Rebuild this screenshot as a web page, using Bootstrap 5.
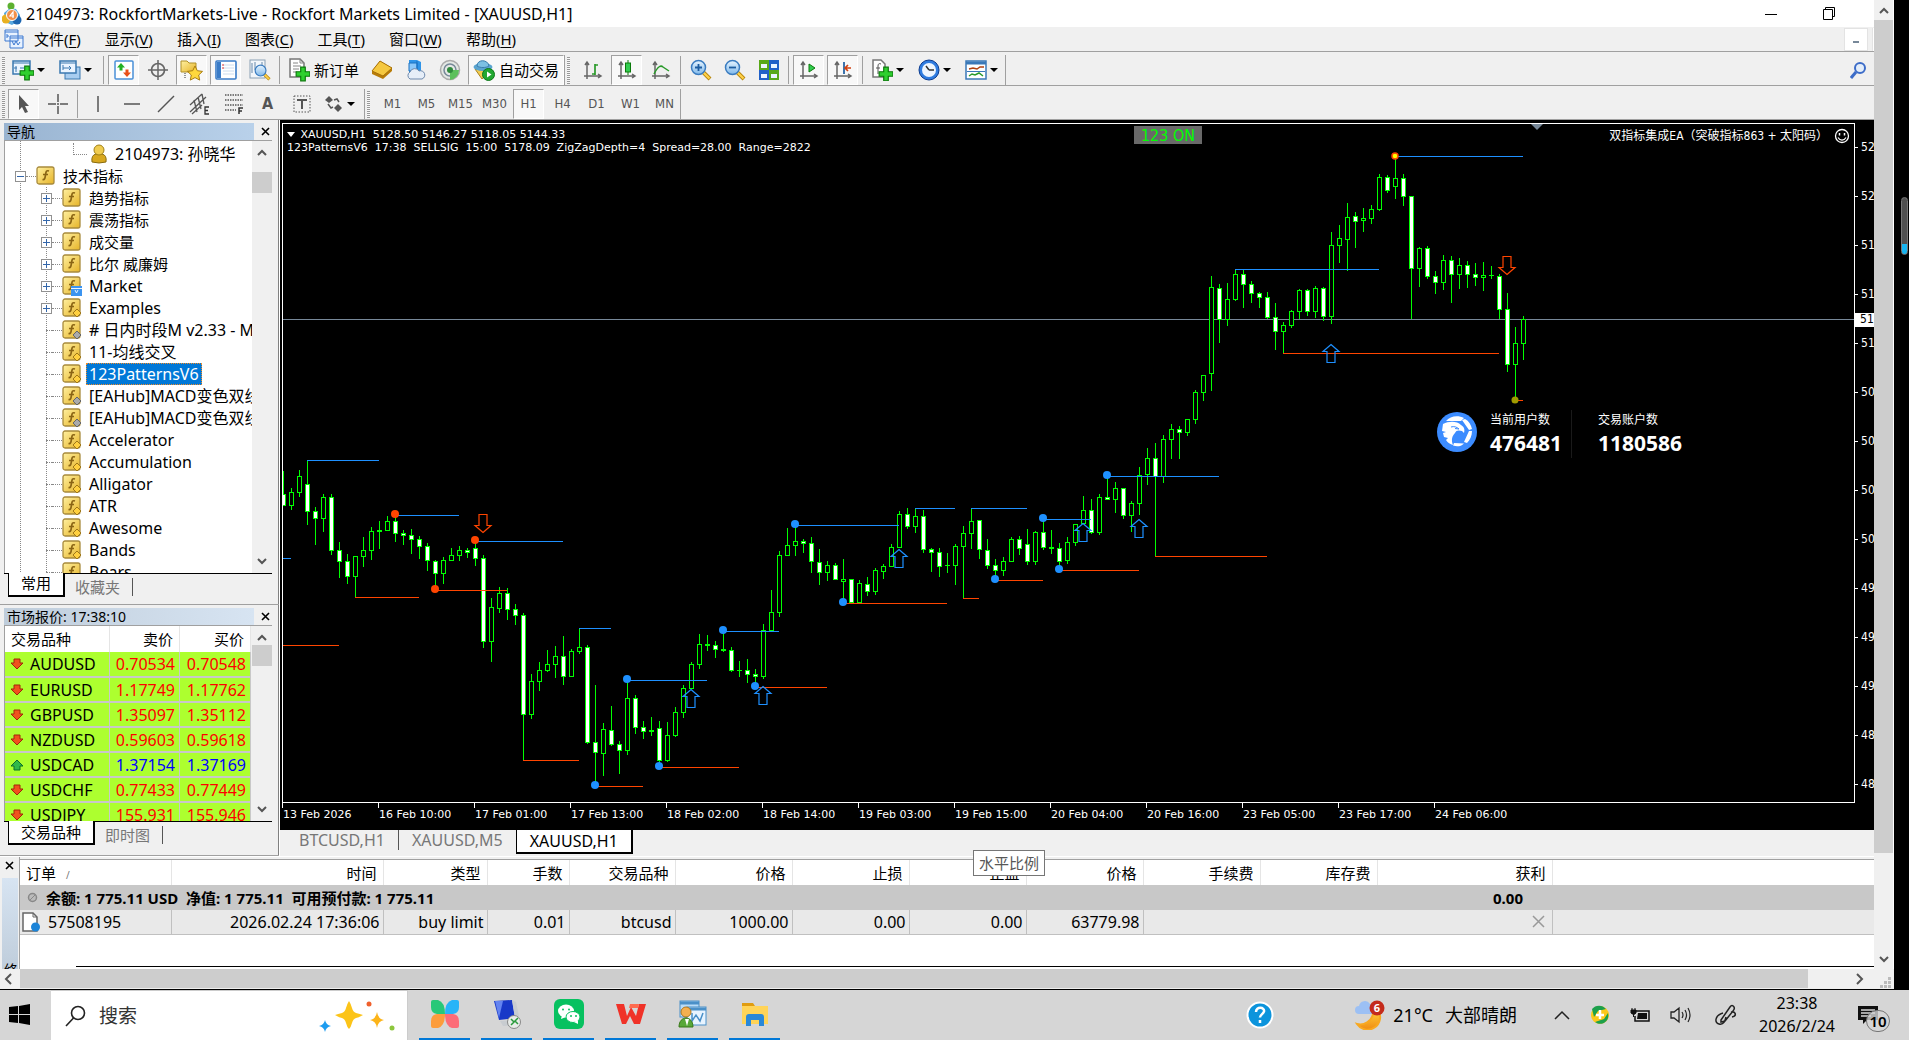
<!DOCTYPE html>
<html lang="zh-CN">
<head>
  <meta charset="UTF-8">
  <meta name="viewport" content="width=device-width, initial-scale=1">
  <title>2104973: RockfortMarkets-Live - Rockfort Markets Limited - [XAUUSD,H1]</title>
  <link rel="stylesheet" href="https://cdn.jsdelivr.net/npm/bootstrap@5.3.0/dist/css/bootstrap.min.css">
  <style>
    :root {
      --ui: "Noto Sans", "Noto Sans CJK SC", sans-serif;
      --tahoma: "DejaVu Sans Condensed", "Noto Sans", "Noto Sans CJK SC", sans-serif;
      --face: #f0f0f0;
      --edge: #a0a0a0;
    }
    body { font-family: var(--ui); font-size: 15px; line-height: 20px; color: #000; background: #000; }
    button { border: 0; background: none; padding: 0; color: inherit; }
    svg { display: block; flex: none; }
    .min-0 { min-width: 0; min-height: 0; }
    .face { background: var(--face); }

    /* 标题栏和菜单 */
    .title-bar { height: 28px; padding-left: 2px; font-size: 16px; }
    .title-bar .win-btn { width: 58px; height: 26px; }
    .title-bar .win-btns { padding-right: 16px; }
    .menu-bar { height: 26px; border-bottom: 1px solid var(--edge); }
    .menu-bar a { color: #000; text-decoration: none; margin-left: 24px; font-size: 15px; }
    .menu-bar a:first-of-type { margin-left: 10px; }
    .menu-bar a u { text-underline-offset: 2px; }
    .mdi-btn { width: 24px; height: 23px; background: #fff; border: 1px solid #e3e3e3; }
    .mdi-cut { width: 2px; height: 23px; background: #fff; border-left: 1px solid #e3e3e3; }

    /* 工具栏 */
    .tool-row { height: 34px; padding-top: 3px; border-bottom: 1px solid var(--edge); }
    .tool-group { gap: 3px; height: 30px; padding-left: 2px; border-right: 1px solid var(--edge); }
    .grip { width: 3px; height: 27px; background: repeating-linear-gradient(#999 0 1px, #f8f8f8 1px 2px); }
    .tb-btn { width: 31px; height: 30px; display: flex; align-items: center; justify-content: center; font-family: var(--tahoma); font-size: 13px; color: #555; }
    .tb-btn.pressed { background: #f8f8f8; border: 1px solid #fff; border-top-color: var(--edge); border-left-color: var(--edge); }
    .tb-btn.drop { width: 44px; justify-content: flex-start; gap: 3px; padding: 0 4px; }
    .tb-btn.drop::after { content: ""; border: 4px solid transparent; border-top-color: #000; border-bottom: 0; }
    .tb-btn.wide { width: auto; font-family: var(--ui); font-size: 15px; color: #000; padding: 0 4px; gap: 4px; }
    .sep { width: 3px; height: 28px; border-left: 1px solid var(--edge); margin-left: 1px; margin-right: -1px; }

    /* 左侧面板 */
    .side { width: 280px; border-right: 1px solid #fff; box-shadow: inset -1px 0 #808080; }
    .side-panel { padding: 3px 7px 5px 4px; border-bottom: 1px solid var(--edge); }
    .side-panel:last-child { padding-bottom: 7px; }
    .panel-title { height: 17px; line-height: 17px; font-size: 14px; }
    .panel-title span { background: linear-gradient(90deg, #99b4d1, #b9d1ea); padding-left: 3px; }
    .panel-title.idle span { background: linear-gradient(90deg, #bfcddb, #d7e4f2); }
    .panel-title button { width: 22px; height: 17px; margin-right: -4px; }
    .panel-box { border-left: 1px solid var(--edge); border-top: 1px solid var(--edge); }
    .panel-view { background: #fff; overflow: hidden; }
    .v-scroll { width: 21px; background: var(--face); }
    .v-scroll i { display: block; width: 20px; height: 21px; background: #cdcdcd; }
    .tab-strip { height: 27px; border-top: 1px solid #000; }
    .tab-strip button { height: 24px; padding: 0 12px; line-height: 20px; color: #777; }
    .tab-strip button:not(.on) { border-right: 1px solid #555; height: 18px; line-height: 14px; padding-left: 10px; }
    .tab-strip .on { background: #fff; color: #000; border: 1px solid #000; border-top: 0; border-right-width: 2px; border-bottom-width: 2px; margin-top: -1px; padding-bottom: 1px; }

    .tree, .tree ul { list-style: none; margin: 0; padding: 0; background: repeating-linear-gradient(#888 0 1px, #fff 1px 2px) 15px 0 / 1px 100% no-repeat; }
    .tree { padding-top: 2px; height: 100%; }
    .tree ul { background: repeating-linear-gradient(#888 0 1px, #fff 1px 2px) 41px 0 / 1px 100% no-repeat; }
    .tree-row { display: flex; align-items: center; height: 22px; white-space: nowrap; }
    .tree-row > * { flex-shrink: 0; }
    .tree-row .twig { width: 10px; border-top: 1px dotted #888; }
    .tree-row .box { width: 11px; height: 11px; border: 1px solid #919191; background: #fff linear-gradient(#36a, #36a) center / 7px 1px no-repeat; }
    .tree-row .box.plus { background: linear-gradient(#36a, #36a) center / 7px 1px no-repeat, linear-gradient(#36a, #36a) center / 1px 7px no-repeat, #fff; }
    .tree-row .leaf { width: 6px; margin-left: 5px; border-top: 1px dotted #888; }
    .tree-row svg { margin-right: 4px; }
    .tree-row .tx { padding: 0 2px; border: 1px solid transparent; line-height: 20px; height: 22px; }
    .tree-row .tx.latin { font-size: 16px; }
    .tree-row .tx.sel { background: #0078d7; color: #fff; border: 1px dotted #f08c28; }
    .lv-1 { padding-left: 10px; }
    .lv-2 { padding-left: 36px; }
    .account { padding-left: 68px; }
    .account .elbow { width: 14px; height: 12px; border: 1px dotted #888; border-top: 0; border-right: 0; align-self: flex-start; margin-right: 3px; }

    .quotes { height: 196px; }
    .quotes table { table-layout: fixed; width: 246px; margin: 0; }
    .quotes th { font-weight: 400; height: 26px; padding: 0 6px; border-right: 1px solid #e5e5e5; }
    .quotes td { height: 25px; padding: 0 4px 0 5px; font-size: 16px; background: #adff2f; border-right: 1px solid #c8c8c8; border-bottom: 2px solid #c8c8c8; color: #f00; }
    .quotes td .sym { gap: 6px; color: #000; }
    .quotes .up td { color: #00f; }

    /* 图表 */
    .chart { background: #000; color: #fff; font-family: "DejaVu Sans", "Noto Sans CJK SC", sans-serif; font-size: 11px; line-height: 13px; padding: 3px 0 0 1px; border-left: 1px solid #000; }
    .plot { border: 1px solid #fff; }
    .plot > svg { position: absolute; inset: 0; width: 100%; height: 100%; }
    .head-lines { position: absolute; left: 4px; top: 4px; white-space: pre; }
    .ea-name { position: absolute; right: 4px; top: 4px; gap: 6px; font-family: var(--tahoma); font-size: 12px; }
    .on-badge { position: absolute; left: 851px; top: 2px; width: 68px; height: 18px; line-height: 19px; font-family: var(--tahoma); font-size: 16px; background: #696969; color: #0f0; text-align: center; }
    .user-box { position: absolute; left: 1154px; top: 286px; font-family: var(--ui); font-size: 12px; }
    .user-box .stat { width: 81px; padding-top: 1px; line-height: 17px; }
    .user-box .stat + .stat { border-left: 1px solid #1a1a1a; width: 130px; padding-left: 26px; }
    .user-box b { display: block; font-size: 21px; line-height: 30px; font-weight: 700; }
    .price-axis { width: 19px; padding-top: 18px; font-family: var(--tahoma); font-size: 12px; }
    .price-axis div { height: 49px; padding-left: 6px; position: relative; }
    .price-axis div::before { content: ""; position: absolute; left: 0; top: 6px; width: 3px; border-top: 1px solid #fff; }
    .price-now { position: absolute; left: 0; top: 190px; width: 19px; height: 14px; padding-left: 5px; background: #fff; color: #000; }
    .time-axis { height: 25px; }
    .time-axis span { width: 96px; flex: none; border-left: 1px solid #fff; height: 4px; padding-top: 5px; line-height: 13px; white-space: nowrap; }
    .chart-tabs { height: 28px; border-top: 2px solid #000; padding-left: 1px; font-size: 16px; }
    .chart-tabs button { height: 20px; padding: 0 13px; color: #777; border-right: 1px solid #555; }
    .chart-tabs button:first-child { padding-left: 18px; }
    .chart-tabs button:nth-child(2) { border-right: 0; }
    .chart-tabs .on { height: 24px; background: #fff; color: #000; border: 1px solid #000; border-width: 0 2px 2px 1px; }

    /* 终端 */
    .terminal { height: 113px; border-top: 1px solid #fff; }
    .term-side { width: 20px; border-right: 1px solid var(--edge); }
    .term-side .bar { width: 16px; margin-left: 2px; background: linear-gradient(#d7e4f2, #bfcddb); overflow: hidden; font-size: 14px; }
    .term-side .bar span { writing-mode: vertical-rl; height: 6px; line-height: 16px; overflow: hidden; }
    .term-main { background: #fff; border-top: 1px solid var(--edge); margin-top: 2px; }
    .term-main table { table-layout: fixed; width: 100%; margin: 0; white-space: nowrap; }
    .term-main th { font-weight: 400; height: 25px; padding: 0 6px; line-height: 18px; border-right: 1px solid #e5e5e5; text-align: right; }
    .term-main th .sort { font-size: 10px; line-height: 12px; color: #777; margin-left: 10px; }
    .term-main td { height: 24px; padding: 0 3px; font-size: 16px; background: #e9e9e9; border-right: 1px solid #c0c0c0; border-bottom: 1px solid #c0c0c0; text-align: right; }
    .term-main th:last-child, .term-main td:last-child { border-right: 0; }
    .term-main .balance td { height: 25px; background: #c8c8c8; border: 0; font-size: 15px; font-weight: 700; white-space: pre; }
    .term-main th:first-child { text-align: left; }
    .term-main td:first-child { text-align: left; padding-left: 2px; }
    .term-main .balance td:nth-child(2) { padding-right: 29px; }
    .term-main td.gap-cell { border-right-color: #e9e9e9; }
    .term-foot { height: 3px; border-top: 1px solid #000; margin-left: 56px; }
    .tip { position: absolute; left: 973px; top: 850px; height: 26px; padding: 2px 5px; background: #fff; border: 1px solid #767676; color: #575757; }

    /* 远程窗口滚动条 */
    .win-v { width: 20px; background: var(--face); border-right: 1px solid #fff; }
    .win-v .thumb { height: 833px; background: #cdcdcd; }
    .win-v .end { height: 20px; }
    .win-h { height: 21px; padding-right: 2px; border-bottom: 1px solid #000; }
    .win-h .thumb { flex: 0 1 1788px; background: #cdcdcd; border-bottom: 1px solid #eee; }
    .edge-strip { width: 15px; background: #000; }
    .edge-strip i { position: absolute; right: 1px; top: 197px; width: 7px; height: 58px; border-radius: 4px; background: linear-gradient(#505050 0 46px, #16b4f0 46px); border: 1px solid #777; }

    /* 任务栏 */
    .task-bar { height: 50px; background: #d6d6d6; }
    .start { width: 51px; padding-left: 9px; }
    .search { width: 357px; background: #fff; border: 1px solid #ccc; border-width: 1px 1px 0 0; padding: 0 12px 0 14px; gap: 10px; }
    .search input { border: 0; outline: 0; width: 180px; font-size: 19px; }
    .search input::placeholder { color: #333; }
    .apps { gap: 11px; padding-left: 11px; }
    .apps button { width: 51px; border-bottom: 2px solid #0078d7; display: flex; align-items: center; justify-content: center; }
    .weather { font-size: 18px; margin-left: 80px; }
    .tray { margin-left: 37px; gap: 20px; }
    .tray svg:last-child { margin-left: 3px; }
    .clock { width: 84px; font-size: 16px; line-height: 23px; margin-left: 18px; }
    .note { width: 50px; height: 40px; position: relative; margin: 0 10px; }
    .note svg { margin-left: 8px; }
    .note em { position: absolute; left: 17px; top: 15px; width: 24px; height: 22px; line-height: 20px; border: 1px solid #777; border-radius: 11px; background: rgba(214, 214, 214, .8); font-style: normal; font-weight: 600; font-size: 15px; }
  </style>
</head>
<body class="vh-100 overflow-hidden d-flex flex-column">

  <!-- 图标定义 -->
  <svg width="0" height="0" class="position-absolute">
    <defs>
      <linearGradient id="gold" x1="0" y1="0" x2="1" y2="1"><stop offset="0" stop-color="#fff0a0"/><stop offset="1" stop-color="#e6b428"/></linearGradient>
      <linearGradient id="sky" x1="0" y1="0" x2="0" y2="1"><stop offset="0" stop-color="#e6f4ff"/><stop offset="1" stop-color="#7fb8ea"/></linearGradient>
      <linearGradient id="flame" x1="0" y1="0" x2="0" y2="1"><stop offset="0" stop-color="#ffd23c"/><stop offset="1" stop-color="#f08c14"/></linearGradient>
      <symbol id="i-plus" viewBox="0 0 14 14"><path d="M5 1h4v4h4v4H9v4H5V9H1V5h4z" fill="#2fd02f" stroke="#0a7a0a"/></symbol>
      <symbol id="i-axes" viewBox="0 0 20 20"><path d="M4 2v17M1 16h17M2 5l2-3 2 3M15 14l3 2-3 2" fill="none" stroke="#666" stroke-width="1.5"/></symbol>
      <symbol id="i-fx" viewBox="0 0 20 20"><rect x="1" y="1" width="17" height="17" rx="2" fill="url(#gold)" stroke="#a88a3c" stroke-width="1.3"/><path d="M13 5c-3-1-3 1-3.500 4S9 14 6.500 13.500M7 8.500h5" fill="none" stroke="#8a6414" stroke-width="1.700"/></symbol>
      <symbol id="i-down" viewBox="0 0 14 12"><path d="M4 1h6v4h3L7 11 1 5h3z" fill="#f0521e" stroke="#a02808"/></symbol>
      <symbol id="i-up" viewBox="0 0 14 12"><path d="M4 11h6V7h3L7 1 1 7h3z" fill="#2fb84a" stroke="#0a7028"/></symbol>
      <symbol id="i-x" viewBox="0 0 9 9"><path d="M1 1l7 7M8 1L1 8" stroke="#000" stroke-width="1.600"/></symbol>
      <symbol id="i-cu" viewBox="0 0 10 7"><path d="M1 6l4-4 4 4" fill="none" stroke="#555" stroke-width="2"/></symbol>
      <symbol id="i-cd" viewBox="0 0 10 7"><path d="M1 1l4 4 4-4" fill="none" stroke="#555" stroke-width="2"/></symbol>
      <symbol id="i-lens" viewBox="0 0 22 22"><path d="M13 13l7 7" stroke="#b8860b" stroke-width="4"/><path d="M13 13l6.500 6.500" stroke="#ffd24a" stroke-width="2.200"/><circle cx="8.500" cy="8.500" r="7" fill="url(#sky)" stroke="#3a7cc0" stroke-width="1.500"/></symbol>
    </defs>
  </svg>

  <div class="d-flex flex-grow-1 min-0 position-relative">
    <div class="d-flex flex-column flex-grow-1 min-0 face">
      <div class="d-flex flex-grow-1 min-0">
        <div class="d-flex flex-column flex-grow-1 min-0 overflow-hidden">

          <!-- 标题栏 -->
          <header class="title-bar bg-white d-flex align-items-center">
            <svg width="20" height="24" viewBox="0 0 20 24"><path d="M2 11l6-5 6 1 4 6v5l-8 5-7-3z" fill="#58a8e0"/><circle cx="9" cy="4" r="3.500" fill="#5cb030"/><circle cx="4" cy="17" r="4.500" fill="#e8b020"/><circle cx="15" cy="18" r="4.500" fill="#1c66b0"/><circle cx="10" cy="13" r="5.500" fill="#f09048" stroke="#fff"/><path d="M11 16v-6l-3 4h4" fill="none" stroke="#fff" stroke-width="1.200"/></svg>
            <span class="ms-1 flex-grow-1">2104973: RockfortMarkets-Live - Rockfort Markets Limited - [XAUUSD,H1]</span>
            <div class="d-flex win-btns">
              <button class="win-btn" aria-label="最小化"><svg class="m-auto" width="12" height="12"><path d="M0 6.500h12" stroke="#000"/></svg></button>
              <button class="win-btn" aria-label="还原"><svg class="m-auto" width="13" height="13"><path d="M2.500 2.500V.5h9v9h-2M.5 2.500h9v10h-9z" fill="none" stroke="#000"/></svg></button>
            </div>
          </header>

          <!-- 菜单 -->
          <nav class="menu-bar face d-flex align-items-center">
            <svg class="ms-1" width="20" height="20" viewBox="0 0 20 20"><path d="M1 1h13v11H1zM6 7h13v12H6z" fill="#e8f2ff" stroke="#3c78d0"/><path d="M1 3h13M6 9h13M8 12l2 4 2-4 2 4 2-3M3 5v4M3 7h2" fill="none" stroke="#3c78d0"/></svg>
            <a href="#">文件(<u>F</u>)</a><a href="#">显示(<u>V</u>)</a><a href="#">插入(<u>I</u>)</a><a href="#">图表(<u>C</u>)</a><a href="#">工具(<u>T</u>)</a><a href="#">窗口(<u>W</u>)</a><a href="#">帮助(<u>H</u>)</a>
            <button class="mdi-btn ms-auto me-1" aria-label="最小化图表"><svg class="m-auto" width="6" height="10"><path d="M0 8h6" stroke="#789" stroke-width="2"/></svg></button>
            <span class="mdi-cut"></span>
          </nav>

          <!-- 常用工具栏 -->
          <div class="tool-row face d-flex align-items-center">
            <div class="tool-group d-flex align-items-center">
              <span class="grip"></span>
              <button class="tb-btn drop" aria-label="新图表"><svg width="22" height="22" viewBox="0 0 22 22"><rect x="1" y="2" width="17" height="13" fill="#eaf4ff" stroke="#3a78b0" stroke-width="1.500"/><path d="M1 4h17M4 7v6M2 9h3M8 9h4" stroke="#3a78b0"/><use href="#i-plus" x="7" y="6" width="16" height="16"/></svg></button>
              <button class="tb-btn drop" aria-label="配置"><svg width="22" height="22" viewBox="0 0 22 22"><rect x="6" y="8" width="15" height="12" fill="#a8cdf0" stroke="#3a78b0"/><rect x="1" y="2" width="16" height="12" fill="#eaf4ff" stroke="#3a78b0" stroke-width="1.500"/><path d="M1 4h16M4 6v5M4 9h8M10 7l2 2-2 2" fill="none" stroke="#3a78b0"/></svg></button>
              <span class="sep"></span>
              <button class="tb-btn pressed" aria-label="市场报价"><svg width="20" height="20" viewBox="0 0 20 20"><rect x="1" y="1" width="18" height="18" rx="1" fill="#fff" stroke="#4a90d8" stroke-width="1.500"/><path d="M7 3l4 4.500H8.500v3h-3v-3H3z" fill="#22b022"/><path d="M13 17l4-4.500h-2.500v-3h-3v3H9z" fill="#e85018"/></svg></button>
              <button class="tb-btn" aria-label="数据窗口"><svg width="20" height="20" viewBox="0 0 20 20"><path d="M10 0v20M0 10h20" stroke="#666" stroke-width="1.500"/><circle cx="10" cy="10" r="6.500" fill="none" stroke="#666" stroke-width="1.700"/></svg></button>
              <button class="tb-btn pressed" aria-label="导航"><svg width="24" height="22" viewBox="0 0 24 22"><path d="M1 2h6l2 2h7v9H1z" fill="url(#gold)" stroke="#b09028"/><path d="M5 14v6" stroke="#333" stroke-dasharray="1 1"/><path d="M15 7l2.300 4.700 5.200.7-3.800 3.600 1 5.100-4.700-2.500-4.700 2.500 1-5.100-3.800-3.600 5.200-.7z" fill="#ffd83c" stroke="#a87c10"/></svg></button>
              <button class="tb-btn pressed" aria-label="终端"><svg width="22" height="20" viewBox="0 0 22 20"><rect x="1" y="1" width="20" height="18" rx="1" fill="#fff" stroke="#3a7cc8" stroke-width="1.600"/><path d="M4 2v16" stroke="#3a7cc8" stroke-width="4"/><path d="M8 5h11M8 8h11M8 11h11M8 14h11" stroke="#cde"/><path d="M7 5h2M7 8h2" stroke="#d33"/></svg></button>
              <button class="tb-btn" aria-label="策略测试"><svg width="22" height="22" viewBox="0 0 22 22"><rect x="1" y="1" width="15" height="18" fill="#f2f6fa" stroke="#8aa0b4"/><path d="M3 4v10M6 3v8M13 3v4" stroke="#68a"/><use href="#i-lens" x="5" y="5" width="17" height="17"/></svg></button>
              <span class="sep"></span>
              <button class="tb-btn wide"><svg width="22" height="24" viewBox="0 0 22 24"><path d="M2 1h10l4 4v14H2z" fill="#fff" stroke="#777" stroke-width="1.500"/><path d="M12 1v4h4M5 5h5M5 8h8M5 11h6M5 14h4" fill="none" stroke="#888"/><use href="#i-plus" x="7" y="8" width="16" height="16"/></svg>新订单</button>
              <button class="tb-btn" aria-label="语言编辑器"><svg width="22" height="22" viewBox="0 0 22 22"><path d="M1 12L9 2l12 7v3l-9 8L1 15z" fill="#b87c08"/><path d="M1 12L9 2l12 7-9 8z" fill="#f5c840" stroke="#a87008"/></svg></button>
              <button class="tb-btn" aria-label="虚拟主机"><svg width="22" height="22" viewBox="0 0 22 22"><path d="M4 1h8l4 2v11H4z" fill="#2f94e8"/><path d="M4 4h8v8H4zM12 2v10" fill="#8cc8fa" stroke="#1a70c0"/><path d="M5 20a4 4 0 010-7 5 5 0 019-1 4 4 0 013 8z" fill="#e6eef8" stroke="#6c88ac"/></svg></button>
              <button class="tb-btn" aria-label="信号"><svg width="22" height="22" viewBox="0 0 22 22"><circle cx="11" cy="11" r="9.500" fill="#e4e8e4" stroke="#aaa" stroke-width="1.500"/><circle cx="11" cy="11" r="6" fill="none" stroke="#789" stroke-width="1.500"/><path d="M11 11v10a10 10 0 009-10z" fill="#5cc05c"/><circle cx="11" cy="11" r="3" fill="#2f8a3c"/></svg></button>
              <button class="tb-btn pressed wide"><svg width="22" height="22" viewBox="0 0 22 22"><path d="M2 10l7 10 7-8z" fill="#f4cc50" stroke="#a88420"/><ellipse cx="10" cy="8" rx="9.500" ry="4" fill="#5aa4d0"/><path d="M4 7c0-7 11-7 12 0-3 2-9 2-12 0z" fill="#7cc0e4" stroke="#3a7cac"/><circle cx="15.500" cy="15.500" r="6" fill="#22a832" stroke="#0c7818"/><path d="M14 12.500l4.500 3-4.500 3z" fill="#fff"/></svg>自动交易</button>
            </div>
            <div class="tool-group d-flex align-items-center">
              <span class="grip"></span>
              <button class="tb-btn ms-1" aria-label="柱状图"><svg width="20" height="20"><use href="#i-axes"/><path d="M9 14h3M12 15V4M12 5h3" stroke="#2a9a2a" stroke-width="1.700"/></svg></button>
              <button class="tb-btn pressed" aria-label="阴阳烛"><svg width="20" height="20"><use href="#i-axes"/><path d="M11 0v15" stroke="#0a7a0a"/><rect x="8.500" y="3" width="5" height="9" fill="#32cd50" stroke="#0a7a0a"/></svg></button>
              <button class="tb-btn" aria-label="折线图"><svg width="20" height="20"><use href="#i-axes"/><path d="M3 14c4-8 7-9 9-7l6 4" fill="none" stroke="#2a9a2a" stroke-width="1.500"/></svg></button>
              <span class="sep"></span>
              <button class="tb-btn" aria-label="放大"><svg width="22" height="22"><use href="#i-lens"/><path d="M8.500 5v7M5 8.500h7" stroke="#1c5ca0" stroke-width="1.800"/></svg></button>
              <button class="tb-btn" aria-label="缩小"><svg width="22" height="22"><use href="#i-lens"/><path d="M5 8.500h7" stroke="#1c5ca0" stroke-width="1.800"/></svg></button>
              <button class="tb-btn" aria-label="平铺窗口"><svg width="22" height="22"><path d="M1 1h10v10H1zM11 11h10v10H11z" fill="#58a818"/><path d="M11 1h10v10H11zM1 11h10v10H1z" fill="#2060c8"/><path d="M3 5h6v4H3zM13 5h6v4h-6zM3 15h6v4H3zM13 15h6v4h-6z" fill="#eaf4ff"/></svg></button>
              <span class="sep"></span>
              <button class="tb-btn pressed" aria-label="自动滚动"><svg width="20" height="20"><use href="#i-axes"/><path d="M10 4l6 4-6 4z" fill="#32cd50" stroke="#0a7a0a"/></svg></button>
              <button class="tb-btn pressed" aria-label="图表平移"><svg width="20" height="20"><use href="#i-axes"/><path d="M11 2v12" stroke="#1c5ca0" stroke-width="1.700"/><path d="M18 8h-5M15 5l-3 3 3 3" fill="none" stroke="#d04010" stroke-width="1.700"/></svg></button>
              <span class="sep"></span>
              <button class="tb-btn drop" aria-label="技术指标"><svg width="22" height="22" viewBox="0 0 22 22"><path d="M2 1h8l4 4v13H2z" fill="#fff" stroke="#777" stroke-width="1.500"/><path d="M10 5c-2-1-3 0-3 2v8M5 9h4" fill="none" stroke="#555"/><use href="#i-plus" x="7" y="7" width="16" height="16"/></svg></button>
              <button class="tb-btn drop" aria-label="周期"><svg width="22" height="22"><circle cx="11" cy="11" r="10" fill="#2f7ce0" stroke="#0c3c90"/><circle cx="11" cy="11" r="7" fill="#eef6ff"/><path d="M11 11L8 7M11 11h5" stroke="#333" stroke-width="1.500"/></svg></button>
              <button class="tb-btn drop" aria-label="模板"><svg width="22" height="20"><rect x="1" y="1" width="20" height="18" fill="#fff" stroke="#3a78b8" stroke-width="1.500"/><path d="M1 3h20" stroke="#3a78b8" stroke-width="3"/><path d="M4 9l4-1 4 1 3-2h4" fill="none" stroke="#b04010" stroke-width="1.500"/><path d="M2 11.500h18" stroke="#3a78b8"/><path d="M4 16l3-2 3 1 4-2 4 3" fill="none" stroke="#2a9a2a" stroke-width="1.500"/></svg></button>
            </div>
            <button class="ms-auto me-2" aria-label="搜索"><svg width="16" height="17"><circle cx="10" cy="6" r="5" fill="#e4eefa" stroke="#3c6cc8" stroke-width="2"/><path d="M6 10l-5 6" stroke="#3c6cc8" stroke-width="3"/></svg></button>
          </div>

          <!-- 画线和周期工具栏 -->
          <div class="tool-row face d-flex align-items-center">
            <div class="tool-group d-flex align-items-center">
              <span class="grip"></span>
              <button class="tb-btn pressed" aria-label="光标"><svg width="12" height="20"><path d="M1 1v15l3-3 3 6 3-1-3-6h4z" fill="#555"/></svg></button>
              <button class="tb-btn" aria-label="十字准线"><svg width="20" height="20"><path d="M10 0v8M10 12v8M0 10h8M12 10h8M9 10h2" stroke="#555" stroke-width="1.500"/></svg></button>
              <span class="sep"></span>
              <button class="tb-btn" aria-label="垂直线"><svg width="16" height="16"><path d="M8 0v16" stroke="#555" stroke-width="1.500"/></svg></button>
              <button class="tb-btn" aria-label="水平线"><svg width="16" height="16"><path d="M0 8h16" stroke="#555" stroke-width="1.500"/></svg></button>
              <button class="tb-btn" aria-label="趋势线"><svg width="18" height="18"><path d="M1 17L17 1" stroke="#555" stroke-width="1.500"/></svg></button>
              <button class="tb-btn" aria-label="等距通道"><svg width="22" height="22"><path d="M1 12L13 1M1 19L17 4M3 21l10-9M5 7l3 12M9 4l3 12M13 1l2 10" stroke="#555" stroke-width="1.300"/><path d="M20 14h-4v7h4M16 17.500h3" fill="none" stroke="#333" stroke-width="1.300"/></svg></button>
              <button class="tb-btn" aria-label="斐波纳契"><svg width="20" height="22"><path d="M1 2h18M1 7h18M1 12h18M1 17h11" stroke="#555" stroke-width="1.500" stroke-dasharray="1.500 1"/><path d="M15 21v-6h4M15 18h3" fill="none" stroke="#333" stroke-width="1.500"/></svg></button>
              <button class="tb-btn fw-bold fs-6" aria-label="文字">A</button>
              <button class="tb-btn" aria-label="文字标签"><svg width="18" height="18"><rect x="1" y="1" width="16" height="16" fill="none" stroke="#555" stroke-dasharray="1.500 1.500"/><path d="M4 5h10M9 5v9" stroke="#555" stroke-width="2"/></svg></button>
              <button class="tb-btn drop" aria-label="箭头"><svg width="20" height="18"><path d="M1 5l4-4 4 4-4 3zM10 13l4-4 4 4-4 4z" fill="#555"/><path d="M4 9l3 4 2-1M10 5l3-1 2 3" fill="none" stroke="#555" stroke-width="1.500"/></svg></button>
            </div>
            <div class="tool-group d-flex align-items-center" id="periods">
              <span class="grip me-1"></span>
            </div>
          </div>

          <div class="d-flex flex-grow-1 min-0">
            <!-- 左侧 -->
            <aside class="side face d-flex flex-column flex-shrink-0">
              <section class="side-panel d-flex flex-column flex-grow-1 min-0">
                <div class="panel-title d-flex"><span class="flex-grow-1">导航</span><button aria-label="关闭导航"><svg class="m-auto" width="9" height="9"><use href="#i-x"/></svg></button></div>
                <div class="panel-box d-flex flex-grow-1 min-0">
                  <div class="panel-view flex-grow-1"><ul class="tree" id="tree"></ul></div>
                  <div class="v-scroll d-flex flex-column align-items-center">
                    <svg class="my-2" width="10" height="7"><use href="#i-cu"/></svg><i class="mt-2"></i><svg class="mt-auto mb-2" width="10" height="7"><use href="#i-cd"/></svg>
                  </div>
                </div>
                <div class="tab-strip d-flex ps-1"><button class="on">常用</button><button class="mt-1">收藏夹</button></div>
              </section>
              <section class="side-panel">
                <div class="panel-title idle d-flex"><span class="flex-grow-1">市场报价: 17:38:10</span><button aria-label="关闭市场报价"><svg class="m-auto" width="9" height="9"><use href="#i-x"/></svg></button></div>
                <div class="panel-box quotes d-flex">
                  <div class="panel-view flex-grow-1">
                    <table>
                      <colgroup><col><col width="70"><col width="71"></colgroup>
                      <thead><tr><th>交易品种</th><th class="text-end">卖价</th><th class="text-end">买价</th></tr></thead>
                      <tbody id="quotes"></tbody>
                    </table>
                  </div>
                  <div class="v-scroll d-flex flex-column align-items-center">
                    <svg class="mt-2 mb-1" width="10" height="7"><use href="#i-cu"/></svg><i></i><svg class="mt-auto mb-2" width="10" height="7"><use href="#i-cd"/></svg>
                  </div>
                </div>
                <div class="tab-strip d-flex ps-1"><button class="on">交易品种</button><button class="mt-1">即时图</button></div>
              </section>
            </aside>

            <!-- 图表 -->
            <main class="d-flex flex-column flex-grow-1 min-0">
              <div class="chart d-flex flex-column flex-grow-1 min-0">
                <div class="d-flex flex-grow-1 min-0">
                  <div class="plot position-relative flex-grow-1 overflow-hidden">
                    <svg id="plot"></svg>
                    <div class="head-lines"><svg class="d-inline-block" width="10" height="6"><path d="M0 0h8L4 5z" fill="#fff"/></svg> XAUUSD,H1  5128.50 5146.27 5118.05 5144.33
123PatternsV6  17:38  SELLSIG  15:00  5178.09  ZigZagDepth=4  Spread=28.00  Range=2822</div>
                    <div class="on-badge">123 ON</div>
                    <div class="ea-name d-flex align-items-center"><span>双指标集成EA（突破指标863 + 太阳码）</span><svg width="16" height="16"><circle cx="8" cy="8" r="6.500" fill="none" stroke="#fff" stroke-width="1.300"/><path d="M5.500 5v2.500M10.500 5v2.500" stroke="#fff" stroke-width="1.500"/><path d="M4 9.500c2 3.500 6 3.500 8 0" fill="none" stroke="#fff" stroke-width="1.200"/></svg></div>
                    <div class="user-box d-flex">
                      <svg class="me-1" width="49" height="42" viewBox="0 -2 49 42"><circle cx="20" cy="20" r="20" fill="#3c8cff"/><path d="M9 9c4-5 12-6 18-3l-3 3H9z" fill="#fff"/><path d="M28 7c4 2 6 6 7 10l-3 1-7-10zM35 19c0 5-2 9-5 12l-3-1 5-11zM17 31l10 .5c-3 3-7 3.500-11 2z" fill="#fff"/><path d="M6 12c6-3 14-3 18 1 3 2 4 4 3 8l-2-2c-3-1-6-1-7 2-3 3-4 7-2 12-3-1-5-2-7-5l2-2-4-1-1-4 3-1-4-1z" fill="#fff"/><path d="M14 15c3-1 6 0 8 2l-4-.5" fill="none" stroke="#3c8cff"/></svg>
                      <div class="stat">当前用户数<b>476481</b></div>
                      <div class="stat">交易账户数<b>1180586</b></div>
                    </div>
                  </div>
                  <div class="price-axis position-relative overflow-hidden flex-shrink-0" id="prices"><span class="price-now">51</span></div>
                </div>
                <div class="time-axis d-flex overflow-hidden flex-shrink-0" id="times"></div>
              </div>
              <div class="chart-tabs face d-flex flex-shrink-0"><button>BTCUSD,H1</button><button>XAUUSD,M5</button><button class="on">XAUUSD,H1</button></div>
            </main>
          </div>

          <!-- 终端 -->
          <section class="terminal face d-flex flex-shrink-0">
            <div class="term-side d-flex flex-column flex-shrink-0">
              <button class="mx-auto mb-2" aria-label="关闭终端"><svg class="mt-1" width="9" height="9"><use href="#i-x"/></svg></button>
              <div class="bar flex-grow-1 d-flex align-items-end"><span>终端</span></div>
            </div>
            <div class="term-main flex-grow-1 min-0 d-flex flex-column">
              <table>
                <colgroup><col width="151"><col width="212"><col width="104"><col width="82"><col width="106"><col width="117"><col width="117"><col width="117"><col width="117"><col width="117"><col width="117"><col width="175"><col></colgroup>
                <thead><tr><th>订单<span class="sort">/</span></th><th>时间</th><th>类型</th><th>手数</th><th>交易品种</th><th>价格</th><th>止损</th><th>止盈</th><th>价格</th><th>手续费</th><th>库存费</th><th>获利</th><th></th></tr></thead>
                <tbody>
                  <tr class="balance"><td colspan="11"><div class="d-flex align-items-center"><svg class="ms-1 me-2" width="12" height="11"><circle cx="6.500" cy="5.500" r="4" fill="#bbb" stroke="#888" stroke-width="1.500"/><path d="M4 8l5-5" stroke="#888"/></svg>余额: 1 775.11 USD  净值: 1 775.11  可用预付款: 1 775.11</div></td><td>0.00</td><td></td></tr>
                  <tr><td><div class="d-flex align-items-center"><svg class="me-2" width="18" height="20"><path d="M1 1h10l4 4v14H1z" fill="#fff" stroke="#666" stroke-width="1.500"/><path d="M11 1v4h4" fill="none" stroke="#666"/><circle cx="13.500" cy="15" r="4.500" fill="#1c84d8"/></svg>57508195</div></td><td>2026.02.24 17:36:06</td><td>buy limit</td><td>0.01</td><td>btcusd</td><td>1000.00</td><td>0.00</td><td>0.00</td><td>63779.98</td><td class="gap-cell"></td><td class="gap-cell"></td><td><button class="float-end me-1" aria-label="删除订单"><svg width="13" height="13"><path d="M1 1l11 11M12 1L1 12" stroke="#999" stroke-width="1.500"/></svg></button></td><td></td></tr>
                </tbody>
              </table>
              <div class="term-foot mt-auto"></div>
            </div>
          </section>
        </div>

        <div class="win-v d-flex flex-column flex-shrink-0">
          <div class="end d-flex"><svg class="m-auto" width="10" height="7"><use href="#i-cu"/></svg></div>
          <div class="thumb"></div>
          <div class="end d-flex mt-auto"><svg class="m-auto" width="10" height="7"><use href="#i-cd"/></svg></div>
        </div>
      </div>

      <div class="win-h d-flex flex-shrink-0 align-items-stretch">
        <svg class="my-auto mx-1" width="12" height="12"><path d="M7 1L2 6l5 5" fill="none" stroke="#555" stroke-width="2"/></svg>
        <div class="thumb"></div>
        <svg class="my-auto ms-auto me-3" width="9" height="12"><path d="M2 1l5 5-5 5" fill="none" stroke="#555" stroke-width="2"/></svg>
        <svg class="mt-auto" width="12" height="12"><path d="M8 0h3v3H8zM8 4h3v3H8zM4 4h3v3H4zM8 8h3v3H8zM4 8h3v3H4zM0 8h3v3H0z" fill="#bbb"/></svg>
      </div>
    </div>
    <div class="edge-strip flex-shrink-0"><i></i></div>
    <div class="tip">水平比例</div>
  </div>

  <!-- 任务栏 -->
  <footer class="task-bar d-flex flex-shrink-0">
    <button class="start" aria-label="开始"><svg width="22" height="22"><path d="M0 3l9-1v8H0zM10 2l11-2v10H10zM0 11h9v8l-9-1zM10 11h11v10l-11-2z"/></svg></button>
    <div class="search d-flex align-items-center">
      <svg width="22" height="22"><circle cx="13" cy="8" r="6.500" fill="none" stroke="#222" stroke-width="1.600"/><path d="M8.500 13L1 21" stroke="#222" stroke-width="1.600"/></svg>
      <input type="text" placeholder="搜索" aria-label="搜索">
      <svg class="ms-auto" width="76" height="32"><path d="M30 1q2 3 3 7 1 4 4 5 4 1 7 2-3 2-7 3-3 1-4 5-1 4-3 6-2-2-3-6-1-4-4-5-4-1-7-3 3-1 7-2 3-1 4-5 1-4 3-7z" fill="#fcc419"/><path d="M58 12q1 7 7 8-6 1-7 8-1-7-7-8 6-1 7-8z" fill="#fcb419"/><path d="M6 20q1 5 6 6-5 1-6 6-1-5-6-6 5-1 6-6z" fill="#1c9cf0"/><circle cx="50" cy="4" r="2.500" fill="#f0602c"/><circle cx="73" cy="28" r="2.500" fill="#8cc63c"/></svg>
    </div>
    <div class="apps d-flex">
      <button aria-label="应用中心"><svg width="30" height="30"><path d="M3 1h5q7 2 7 14H7q-6-1-6-7V3q0-2 2-2z" fill="#28c878"/><path d="M27 1h-5q-7 2-7 14h8q6-1 6-7V3q0-2-2-2z" fill="#28b4f8"/><path d="M3 29h5q7-2 7-14H7q-6 1-6 7v5q0 2 2 2z" fill="#fc9c3c"/><path d="M27 29h-5q-7-2-7-14h8q6 1 6 7v5q0 2-2 2z" fill="#fc6c78"/></svg></button>
      <button aria-label="远程桌面"><svg width="30" height="30"><path d="M2 2l18-1 3 18-16 2z" fill="#1838c8"/><path d="M3 2h8L7 19z" fill="#6484f0"/><path d="M20 1l4 2 3 14-4 2zM8 22l12-1 3 5-12 1z" fill="#c8ccd0"/><circle cx="22" cy="23" r="6.500" fill="#e8ece8" stroke="#888"/><path d="M19 20l3 3-3 3M26 19l-3 3 3 3" fill="none" stroke="#2a9a3c" stroke-width="1.500"/></svg></button>
      <button aria-label="微信"><svg width="30" height="30"><rect width="30" height="30" rx="6" fill="#07c160"/><ellipse cx="12" cy="12" rx="8" ry="6.500" fill="#fff"/><ellipse cx="19" cy="18" rx="7" ry="5.500" fill="#fff" stroke="#07c160"/><path d="M7 20l1-4 4 2zM24 25l-4-2 4-2z" fill="#fff"/><circle cx="9" cy="10.500" r="1" fill="#07c160"/><circle cx="15" cy="10.500" r="1" fill="#07c160"/><circle cx="17" cy="17" r="1" fill="#07c160"/><circle cx="22" cy="17" r="1" fill="#07c160"/></svg></button>
      <button aria-label="WPS"><svg width="30" height="24"><path d="M0 2h8l3 12 4-9 5 9 3-12h7l-6 20h-6l-4-8-4 8H6z" fill="#f03228"/><path d="M14 2h9l-1 4h-9z" fill="#ff6c50"/></svg></button>
      <button aria-label="MetaTrader"><svg width="30" height="30"><rect x="2" y="2" width="19" height="16" fill="#b8dcf8" stroke="#4a90c8"/><rect x="9" y="8" width="19" height="18" fill="#e8f4ff" stroke="#4a90c8"/><path d="M2 4h19M9 10h19" stroke="#4a90c8" stroke-width="3"/><path d="M14 14v8l4-6 4 6 3-8" fill="none" stroke="#4a90c8" stroke-width="1.500"/><circle cx="8" cy="13" r="5" fill="#f4b050" stroke="#b07820"/><path d="M1 28c0-12 14-12 14 0z" fill="#58a838" stroke="#387818"/><path d="M7 20l2 7 2-7z" fill="#fff"/></svg></button>
      <button aria-label="文件资源管理器"><svg width="28" height="26"><path d="M1 2h11l2 3H1z" fill="#e09c10"/><path d="M1 5h26v18H1z" fill="#ffd458"/><path d="M5 25v-9q0-3 3-3h12q3 0 3 3v9h-5v-6h-8v6z" fill="#2a88d8"/></svg></button>
    </div>
    <div class="d-flex align-items-center ms-auto">
      <svg width="28" height="28"><circle cx="14" cy="14" r="12.500" fill="#0c94dc" stroke="#fff" stroke-width="2"/><path d="M10 11c0-6 9-5 8-.5-.5 2.500-4 3-4 6M14 19v3" fill="none" stroke="#fff" stroke-width="2.500"/></svg>
      <div class="weather d-flex align-items-center">
        <svg width="31" height="30"><path d="M24 10a12 12 0 01-21 14 13 13 0 0016-10z" fill="url(#flame)" stroke="#f8a820" stroke-width="2"/><path d="M5 14a4 4 0 010-8 6 6 0 0111-2 5 5 0 013 10z" fill="#9cc0f4"/><circle cx="23" cy="8" r="7.500" fill="#c42b1c"/><text x="23" y="12" font-size="11" font-weight="700" fill="#fff" text-anchor="middle">6</text></svg>
        <span class="ms-2">21°C</span><span class="ms-2 ps-1">大部晴朗</span>
      </div>
      <div class="tray d-flex align-items-center">
        <svg width="16" height="10"><path d="M1 9l7-7 7 7" fill="none" stroke="#222" stroke-width="1.500"/></svg>
        <svg width="20" height="20"><circle cx="10" cy="10" r="9" fill="#fcc81c"/><path d="M2 4a9 9 0 0114 0l-8 2-4 6zM18 8c2 8-6 14-13 9l9-3z" fill="#1ca04c"/><path d="M10 5v9M6 10h8" stroke="#fff" stroke-width="2.500"/></svg>
        <svg width="20" height="16"><path d="M6 4h13v10H5V9" fill="none" stroke="#111" stroke-width="1.500"/><path d="M8 6h9v6H7z" fill="#111"/><path d="M1 3h5v3q-2 3-5 0zM2 1v2M5 1v2M3.500 7v3" stroke="#111" fill="#111"/></svg>
        <svg width="22" height="18"><path d="M1 6h3l5-4v14l-5-4H1z" fill="none" stroke="#222" stroke-width="1.300"/><path d="M12 6q2 3 0 6M15 4q3 5 0 10M18 2q4 7 0 14" fill="none" stroke="#222" stroke-width="1.200"/></svg>
        <svg width="22" height="22"><path d="M6 16L15 3q2-3 4 0 1 2-1 4l-8 10-4 1zM8 9c-8 2-9 10-4 11s6-3 7-7M16 8c5-1 6 4 1 5" fill="none" stroke="#222" stroke-width="1.500"/></svg>
      </div>
      <div class="clock text-center"><div>23:38</div><div>2026/2/24</div></div>
      <button class="note" aria-label="通知"><svg width="22" height="20"><path d="M1 1h20v14H10l-4 4v-4H1z" fill="#111"/><path d="M4 5h14M4 8h14M4 11h10" stroke="#d6d6d6" stroke-width="1.300"/></svg><em>10</em></button>
    </div>
  </footer>

  <script src="https://cdn.jsdelivr.net/npm/bootstrap@5.3.0/dist/js/bootstrap.bundle.min.js"></script>
  <script>
    // 周期按钮
    const periods = ['M1', 'M5', 'M15', 'M30', 'H1', 'H4', 'D1', 'W1', 'MN'];
    document.getElementById('periods').insertAdjacentHTML('beforeend',
      periods.map(p => `<button class="tb-btn${p === 'H1' ? ' pressed' : ''}">${p}</button>`).join(''));

    // 导航树
    const fx = badge => `<svg width="20" height="20">
      <use href="#i-fx"/>
      ${badge === 'shop' ? '<path d="M9 10h11v10H9z" fill="#3c94f0"/><path d="M9 12.500h11M13 14l1.500 3 1.500-3" stroke="#e8f4ff" fill="none"/>' : ''}
      ${badge === 'gold' || badge === 'gray' ? `<path d="M15 11l4 4-4 4-4-4z" fill="${badge === 'gold' ? '#ffd040' : '#aaa'}" stroke="${badge === 'gold' ? '#a07818' : '#666'}"/>` : ''}
    </svg>`;
    const label = t => `<span class="tx${/[A-Z0-9]/.test(t) ? ' latin' : ''}${t === '123PatternsV6' ? ' sel' : ''}">${t}</span>`;
    const folders = [['趋势指标'], ['震荡指标'], ['成交量'], ['比尔 威廉姆'], ['Market', 'shop'], ['Examples', 'gold']];
    const leaves = [['# 日内时段M v2.33 - MT4', 'gray'], ['11-均线交叉', 'gold'], ['123PatternsV6', 'gold'],
      ['[EAHub]MACD变色双线', 'gray'], ['[EAHub]MACD变色双线', 'gray'], ['Accelerator', 'gold'], ['Accumulation', 'gold'],
      ['Alligator', 'gold'], ['ATR', 'gold'], ['Awesome', 'gold'], ['Bands', 'gold'], ['Bears', 'gold']];
    document.getElementById('tree').innerHTML = `
      <li class="tree-row account"><span class="elbow"></span><svg width="18" height="20"><path d="M2 18q-1-7 4-8h6q5 1 4 8-7 2-14 0z" fill="#d8a820" stroke="#8a6c10"/><circle cx="9" cy="6" r="5" fill="#f0cc50" stroke="#a08018"/></svg>${label('2104973: 孙晓华')}</li>
      <li class="tree-row lv-1"><span class="box"></span><span class="twig"></span>${fx()}${label('技术指标')}</li>
      <li><ul>
        ${folders.map(f => `<li class="tree-row lv-2"><span class="box plus"></span><span class="twig"></span>${fx(f[1])}${label(f[0])}</li>`).join('')}
        ${leaves.map(f => `<li class="tree-row lv-2"><span class="leaf"></span><span class="twig"></span>${fx(f[1])}${label(f[0])}</li>`).join('')}
      </ul></li>`;

    // 报价
    const quotes = [['AUDUSD', '0.70534', '0.70548'], ['EURUSD', '1.17749', '1.17762'], ['GBPUSD', '1.35097', '1.35112'],
      ['NZDUSD', '0.59603', '0.59618'], ['USDCAD', '1.37154', '1.37169', 1], ['USDCHF', '0.77433', '0.77449'], ['USDJPY', '155.931', '155.946']];
    document.getElementById('quotes').innerHTML = quotes.map(q => `
      <tr class="${q[3] ? 'up' : ''}">
        <td><span class="sym d-flex align-items-center"><svg width="14" height="12"><use href="#i-${q[3] ? 'up' : 'down'}"/></svg>${q[0]}</span></td>
        <td class="text-end">${q[1]}</td><td class="text-end">${q[2]}</td>
      </tr>`).join('');

    // 坐标轴
    const prices = ['52', '52', '51', '51', '51', '50', '50', '50', '50', '49', '49', '49', '48', '48'];
    document.getElementById('prices').insertAdjacentHTML('afterbegin', prices.map(p => `<div>${p}</div>`).join(''));
    const times = ['13 Feb 2026', '16 Feb 10:00', '17 Feb 01:00', '17 Feb 13:00', '18 Feb 02:00', '18 Feb 14:00', '19 Feb 03:00',
      '19 Feb 15:00', '20 Feb 04:00', '20 Feb 16:00', '23 Feb 05:00', '23 Feb 17:00', '24 Feb 06:00'];
    document.getElementById('times').innerHTML = times.map(t => `<span>${t}</span>`).join('');

    // K线: 影线上端, 实体上端, 实体下端, 影线下端, 1 = 阴线
    const bars = [
      [473,496,508,508,1],[490,494,508,512],[472,478,495,499],[462,486,514,527,1],[509,513,521,547,1],[496,499,521,534],
      [496,499,553,557,1],[544,552,564,580,1],[556,563,579,586,1],[558,558,579,599],[539,552,559,569],[529,533,553,562],
      [523,532,534,551],[518,523,533,533],[517,523,536,544,1],[532,535,538,547,1],[531,537,542,556,1],[538,541,549,561,1],
      [545,548,563,573,1],[562,563,576,592,1],[559,562,576,586],[550,557,563,563],[548,552,558,563],[550,552,555,560,1],
      [543,550,561,568,1],[557,560,644,650,1],[600,609,644,664],[589,595,611,615],[590,595,612,622,1],[606,611,618,627,1],
      [615,617,717,763,1],[676,683,717,721],[664,672,684,693],[652,666,673,674],[648,658,667,680],[638,658,679,687,1],
      [651,653,679,679],[630,649,654,656],[647,649,745,746,1],[687,744,755,787,1],[725,731,756,778],[708,732,747,748,1],
      [743,746,753,776,1],[682,700,753,757],[697,700,730,736,1],[723,729,734,741,1],[719,732,734,738],[723,730,763,767,1],
      [724,737,763,764],[709,714,738,739],[687,690,715,720],[664,666,691,691],[636,646,667,671],[637,646,648,653],
      [643,647,652,660,1],[633,651,653,654],[649,652,673,674,1],[663,672,673,679],[661,672,677,685,1],[671,676,679,689,1],
      [626,632,679,681],[592,614,633,633],[553,557,615,619],[530,547,558,558],[527,543,548,558],[541,543,546,555,1],
      [539,545,564,575,1],[551,564,575,587,1],[563,567,575,583],[565,567,582,582,1],[561,581,584,603],[581,581,605,605,1],
      [582,585,605,605],[579,586,594,598,1],[570,572,594,597],[566,568,574,581],[546,549,569,569],[513,516,550,550],
      [510,516,529,531,1],[510,518,529,535],[512,518,552,555,1],[550,551,555,574,1],[550,554,569,579,1],[555,567,568,575],
      [546,548,568,587],[528,535,549,600],[510,523,536,551],[522,522,552,561,1],[541,552,568,571,1],[561,567,573,580,1],
      [559,563,573,578],[539,541,564,564],[538,541,551,557,1],[531,546,564,567,1],[533,534,564,567],[522,534,550,552,1],
      [532,549,551,556],[545,550,564,570,1],[539,544,563,566],[526,526,545,548],[498,512,526,526],[501,512,535,536,1],
      [496,499,535,537],[478,499,502,502,1],[484,490,502,515],[490,490,518,521,1],[503,505,518,534],[469,477,506,517],
      [450,460,477,487],[445,460,479,558,1],[437,441,479,485],[426,431,442,461],[428,431,435,461,1],[421,421,435,438],
      [392,394,422,426],[377,377,395,403],[278,289,376,393],[286,290,322,345,1],[285,301,322,328],[271,276,302,303],
      [271,276,287,310,1],[283,286,296,305,1],[294,295,300,310,1],[294,299,320,321,1],[305,319,334,352,1],[324,327,334,355],
      [312,313,328,330],[291,292,314,321],[291,292,314,318,1],[288,290,314,320],[289,290,319,323,1],[234,247,319,326],
      [227,240,248,265],[205,219,242,273],[214,218,224,250,1],[210,220,223,234],[207,211,221,226],[176,179,212,213],
      [177,179,193,195,1],[158,180,189,201],[176,180,199,208,1],[198,198,271,321,1],[249,250,271,289],[248,250,279,281,1],
      [273,278,285,296,1],[257,262,285,292],[258,262,277,305,1],[260,267,277,291],[263,267,277,290,1],[265,276,280,288,1],
      [264,277,280,293],[268,277,278,281],[276,278,312,321,1],[295,311,367,374,1],[329,345,367,400],[318,321,346,362]
    ];
    // 支撑阻力线: x1, x2, y
    const blue = [[307,379,462],[283,291,560],[395,459,517],[475,563,543],[579,611,630],[627,707,682],[723,779,633],[795,899,527],
      [915,955,510],[971,1027,510],[1043,1091,521],[1107,1219,478],[1235,1379,271],[1395,1523,158]];
    const red = [[283,339,647],[355,419,599],[435,507,592],[523,579,762],[595,643,788],[659,739,769],[755,827,689],[843,947,605],
      [963,979,600],[995,1043,582],[1059,1139,572],[1155,1267,558],[1283,1499,355],[1515,1523,402]];
    const blueDots = [[627,681],[723,632],[755,688],[595,787],[659,768],[795,526],[843,604],[995,581],[1043,520],[1059,571],[1107,477]];
    const redDots = [[395,516],[475,542],[435,591]];
    // 信号箭头的尖端
    const ups = [[691,691],[763,688],[899,551],[1083,525],[1139,521],[1331,346]];
    const downs = [[483,535],[1507,277]];

    function drawPlot() {
      let s = '<path d="M283 321.500H4000" stroke="#778899"/>';
      bars.forEach(([hi, top, bot, lo, bear], i) => {
        const x = 283 + i * 8;
        s += `<path d="M${x + .5} ${hi}V${top}M${x + .5} ${bot}V${lo}" stroke="#0f0"/>`;
        s += bot - top < 3
          ? `<rect x="${x - 2}" y="${top}" width="5" height="${bot - top}" fill="#0f0"/>`
          : `<rect x="${x - 1.5}" y="${top + .5}" width="4" height="${bot - top - 1}" fill="${bear ? '#fff' : '#000'}" stroke="#0f0"/>`;
      });
      blue.forEach(l => s += `<path d="M${l[0]} ${l[2] + .5}H${l[1]}" stroke="#1e90ff"/>`);
      red.forEach(l => s += `<path d="M${l[0]} ${l[2] + .5}H${l[1]}" stroke="#ff4500"/>`);
      blueDots.forEach(d => s += `<circle cx="${d[0]}" cy="${d[1]}" r="4" fill="#1e90ff"/>`);
      redDots.forEach(d => s += `<circle cx="${d[0]}" cy="${d[1]}" r="4" fill="#ff4500"/>`);
      s += '<circle cx="1395" cy="158" r="3" fill="#ff0" stroke="#ff4500" stroke-width="1.500"/><circle cx="1515" cy="402" r="3.500" fill="#a09b00"/>';
      ups.forEach(([x, y]) => s += `<path d="M${x} ${y + .5}l8 7h-4v11h-8v-11h-4z" fill="none" stroke="#1e90ff" stroke-width="1.200"/>`);
      downs.forEach(([x, y]) => s += `<path d="M${x} ${y - .5}l8-7h-4v-11h-8v11h-4z" fill="none" stroke="#ff4500" stroke-width="1.200"/>`);
      s += '<path d="M1531 126h12l-6 6z" fill="#778899"/>';
      document.getElementById('plot').innerHTML = `<g transform="translate(-283 -126)">${s}</g>`;
    }
    drawPlot();
  </script>
</body>
</html>
